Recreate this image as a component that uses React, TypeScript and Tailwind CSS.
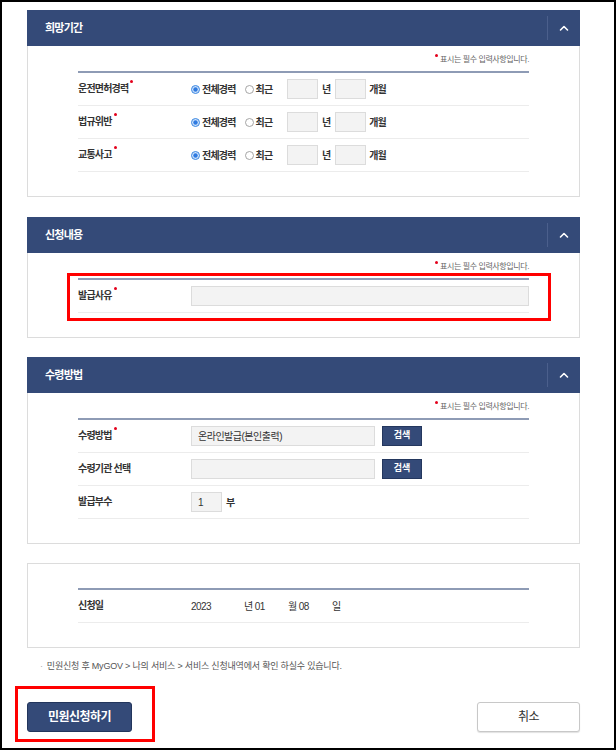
import type { ReactNode } from 'react'

const font = "font-['Liberation_Sans','Noto_Sans_CJK_KR',sans-serif]"

function Dot() {
  return <span className="ml-[2px] mt-[-3px] inline-block size-[3px] shrink-0 rounded-full bg-[#e3001b]" />
}

function Label({ text, required, w = 'w-[113px]' }: { text: string; required?: boolean; w?: string }) {
  return (
    <div className={`${w} flex shrink-0 items-start text-[10px] font-bold leading-[12px] tracking-[-0.8px] text-[#333]`}>
      {text}
      {required && <Dot />}
    </div>
  )
}

function Chevron() {
  return (
    <svg width="12" height="10" viewBox="0 0 12 10" fill="none">
      <polyline points="2.5,7 6,3.5 9.5,7" stroke="#fff" strokeWidth="1.6" strokeLinecap="round" strokeLinejoin="round" />
    </svg>
  )
}

function Radio({ checked }: { checked?: boolean }) {
  return (
    <svg width="9" height="9" viewBox="0 0 9 9" className="shrink-0">
      {checked ? (
        <>
          <circle cx="4.5" cy="4.5" r="4" fill="#cfe3fb" stroke="#3b86e0" strokeWidth="1" />
          <circle cx="4.5" cy="4.5" r="2.2" fill="#2f7ae0" />
        </>
      ) : (
        <circle cx="4.5" cy="4.5" r="4" fill="#fff" stroke="#9a9a9a" strokeWidth="0.9" />
      )}
    </svg>
  )
}

function Note() {
  return (
    <div className="flex h-[16px] items-center justify-end">
      <span className="flex items-start text-[8px] leading-[10px] tracking-[-0.4px] text-[#666]">
        <span className="mr-[2px] mt-[-1px] inline-block size-[3px] rounded-full bg-[#e3001b]" />
        표시는 필수 입력사항입니다.
      </span>
    </div>
  )
}

function Row({ children }: { children: ReactNode }) {
  return <div className="flex h-[33px] items-center border-b border-[#ececec]">{children}</div>
}

function Box({ w, children }: { w: string; children?: ReactNode }) {
  return (
    <div className={`${w} flex h-[20px] shrink-0 items-center border border-[#dcdcdc] bg-[#f3f3f3] pl-[6px] text-[10px] tracking-[-0.5px] text-[#333]`}>
      {children}
    </div>
  )
}

function SearchBtn() {
  return (
    <button className="ml-[7px] h-[20px] w-[40px] shrink-0 border border-[#24375e] bg-[#344a78] text-[9px] font-bold text-white">
      검색
    </button>
  )
}

function Card({ title, children }: { title: string; children: ReactNode }) {
  return (
    <section className="w-[553px]">
      <div className="flex h-[36px] items-stretch bg-[#344a78]">
        <h2 className="flex flex-1 items-center pl-[18px] text-[11px] font-bold tracking-[-0.8px] text-white">{title}</h2>
        <div className="my-[6px] flex w-[33px] items-center justify-center border-l border-[#4b5f8c]">
          <Chevron />
        </div>
      </div>
      <div className="border border-t-0 border-[#dcdcdc] px-[50px] pb-[24px] pt-[6px]">
        <Note />
        <div className="mt-[3px] border-t-2 border-[#8e9bb5]">{children}</div>
      </div>
    </section>
  )
}

const periods = ['운전면허경력', '법규위반', '교통사고']

export default function App() {
  return (
    <div className={`${font} flex h-[750px] w-[616px] flex-col border-2 border-black bg-white pl-[25px] pt-[8px]`}>
      <Card title="희망기간">
        {periods.map((p) => (
          <Row key={p}>
            <Label text={p} required />
            <div className="flex w-[96px] shrink-0 items-center text-[10px] font-bold tracking-[-0.8px] text-[#333]">
              <Radio checked />
              <span className="ml-[2px]">전체경력</span>
              <span className="ml-[9px]"><Radio /></span>
              <span className="ml-[2px]">최근</span>
            </div>
            <Box w="w-[31px]" />
            <span className="ml-[4px] text-[10px] font-bold text-[#333]">년</span>
            <span className="ml-[4px]"><Box w="w-[31px]" /></span>
            <span className="ml-[3px] text-[10px] font-bold tracking-[-0.8px] text-[#333]">개월</span>
          </Row>
        ))}
      </Card>

      <div className="mt-[20px]">
        <Card title="신청내용">
          <div className="relative">
            <Row>
              <Label text="발급사유" required />
              <Box w="flex-1" />
            </Row>
            <div className="absolute left-[-11px] top-[-7px] h-[48px] w-[484px] border-[3px] border-[#ff0000]" />
          </div>
        </Card>
      </div>

      <div className="mt-[19px]">
        <Card title="수령방법">
          <Row>
            <Label text="수령방법" required />
            <Box w="w-[184px]">온라인발급(본인출력)</Box>
            <SearchBtn />
          </Row>
          <Row>
            <Label text="수령기관 선택" />
            <Box w="w-[184px]" />
            <SearchBtn />
          </Row>
          <Row>
            <Label text="발급부수" />
            <Box w="w-[31px]">1</Box>
            <span className="ml-[4px] text-[10px] font-bold text-[#333]">부</span>
          </Row>
        </Card>
      </div>

      <section className="mt-[19px] w-[553px] border border-[#dcdcdc] px-[50px] pb-[24px] pt-[24px]">
        <div className="border-t-2 border-[#8e9bb5]">
          <Row>
            <Label text="신청일" />
            <div className="flex text-[10px] tracking-[-0.6px] text-[#333]">
              <span className="w-[53px]">2023</span>
              <span className="w-[44px]">년 01</span>
              <span className="w-[44px]">월 08</span>
              <span>일</span>
            </div>
          </Row>
        </div>
      </section>

      <p className="mt-[13px] flex h-[12px] items-center pl-[13px] text-[9px] tracking-[-0.2px] text-[#555]">
        <span className="mr-[4px] text-[#aaa]">·</span>
        민원신청 후 MyGOV &gt; 나의 서비스 &gt; 서비스 신청내역에서 확인 하실수 있습니다.
      </p>

      <div className="mt-[29px] flex w-[553px] items-center justify-between">
        <div className="relative">
          <button className="h-[30px] w-[105px] rounded-[3px] border border-[#22355c] bg-[#344a78] text-[12px] font-bold tracking-[-0.5px] text-white">
            민원신청하기
          </button>
          <div className="absolute left-[-12px] top-[-16px] h-[56px] w-[140px] border-[3px] border-[#ff0000]" />
        </div>
        <button className="h-[30px] w-[103px] rounded-[3px] border border-[#c8c8c8] bg-white text-[12px] tracking-[-0.5px] text-[#333] shadow-[0_1px_1px_rgba(0,0,0,0.12)]">
          취소
        </button>
      </div>
    </div>
  )
}
